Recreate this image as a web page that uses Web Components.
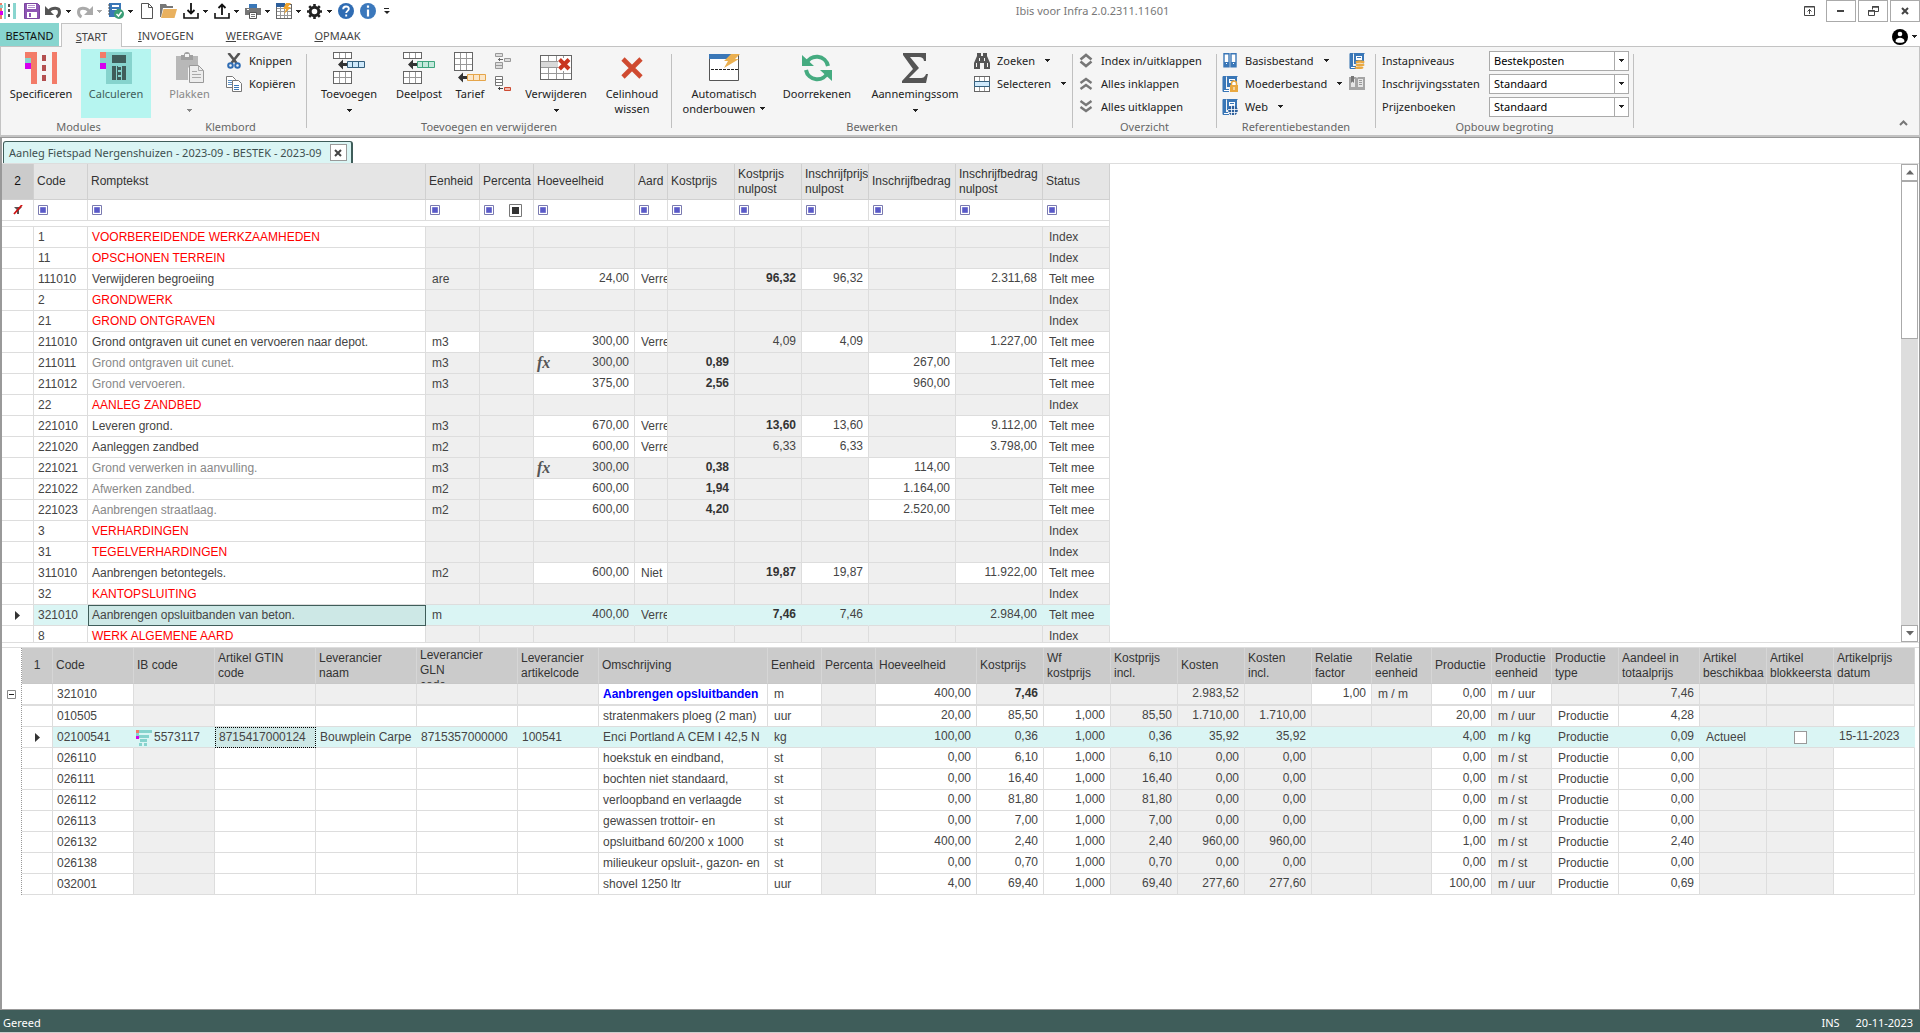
<!DOCTYPE html>
<html lang="nl">
<head>
<meta charset="utf-8">
<title>Ibis voor Infra</title>
<style>
html,body{margin:0;height:100%}
body{font:11px/15px "Noto Sans","Open Sans",sans-serif;color:#222;background:#fff;overflow:hidden}
ibis-app{height:100vh}
</style>
</head>
<body>
<ibis-app></ibis-app>
<script>
const grid9=(x,y,w,h,c,r,s='#666',f='#fff')=>{let o=`<rect x="${x+.5}" y="${y+.5}" width="${w-1}" height="${h-1}" fill="${f}"/>`;let p='';for(let i=1;i<c;i++)p+=`M${Math.round(x+i*(w-1)/c)+.5} ${y+1}v${h-2}`;for(let i=1;i<r;i++)p+=`M${x+1} ${Math.round(y+i*(h-1)/r)+.5}h${w-2}`;return `<g stroke="${s}" fill="none">${o}<path d="${p}" stroke="#999"/></g>`};
const book='<path d="M1 0h14v1M1 .5v15" stroke="#2d6cad" fill="none"/><path d="M1 0h3v13H1zM5 0h10v11H5z" fill="#3a77b7"/><path d="M1 13h6v3H1z" fill="#3a77b7"/><path d="M2 14h5v1H2z" fill="#fff"/><path d="M7 3h6v4H7z" fill="#fff"/><path d="M8 4.5h4" stroke="#3a77b7"/>';
const insertArrow=(f,s)=>grid9(0,0,19,7,3,1)+grid9(0,19,19,13,3,2)+`<path d="M5 12.500l5-5v3.500h4v3h-4v3.500z" fill="#333"/><path d="M14.500 9.500h17v6h-17zM19.500 9.500v6M25.500 9.500v6" fill="${f}" stroke="${s}"/>`;
const ICONS={
 app:[16,16,'<path d="M0 0h2v16H0z" fill="#ee7b66"/><path d="M0 2h3v3H0z" fill="#89d5cf"/><path d="M0 8h3v4H0z" fill="#d400ee"/><path d="M4 0h2v16H4zM13 0h3v16h-3z" fill="#89d5cf"/><path d="M8 1h2v3H8zM8 6h2v3H8zM8 11h2v3H8z" fill="#555"/>'],
 save:[16,16,'<path d="M.5.5h13l2 2v13H.5z" fill="#8e56b4" stroke="#7b449f"/><path d="M3 1h9v5H3z" fill="#fff"/><path d="M4 2.500h7M4 4.500h7" stroke="#b48fce"/><path d="M3 9h10v6H3z" fill="#fff"/><path d="M5 10h2v4H5z" fill="#8e56b4"/>'],
 undo:[17,16,'<path d="M4 8C7 4.500 14.500 4 14.500 9c0 2-1 4-3 5" fill="none" stroke="#555" stroke-width="3"/><path d="M0 3v9h9z" fill="#555"/>'],
 redo:[17,16,'<path d="M13 8C10 4.500 2.500 4 2.500 9c0 2 1 4 3 5" fill="none" stroke="#aaa" stroke-width="3"/><path d="M17 3v9H8z" fill="#aaa"/>'],
 doccheck:[16,16,'<path d="M1 0h12v8l-5 6H1z" fill="#3a77b7"/><path d="M4 2h7v2H4zM4 6h5v1H4z" fill="#fff"/><path d="M0 2h2M0 5h2M0 8h2M0 11h2" stroke="#555"/><circle cx="11" cy="11" r="5" fill="#3a9e76"/><path d="M8.500 11l2 2 3-4" stroke="#fff" stroke-width="1.500" fill="none"/>'],
 file:[16,16,'<path d="M2.500.5h7l4 4v11h-11z" fill="#fff" stroke="#555"/><path d="M9.500.5v4h4" fill="none" stroke="#555"/>'],
 folder:[17,16,'<path d="M0 1h6l1 2h6v2H3L1 14H0z" fill="#777"/><path d="M3.500 6H17l-2.500 9H1z" fill="#e9b15f"/>'],
 down:[16,16,'<path d="M1 10v5h14v-5" fill="none" stroke="#111" stroke-width="1.600"/><path d="M8 0v10M4.500 7L8 10.500 11.500 7" fill="none" stroke="#111" stroke-width="1.800"/>'],
 up:[16,16,'<path d="M1 10v5h14v-5" fill="none" stroke="#111" stroke-width="1.600"/><path d="M8 12V2M4.500 5L8 1.500 11.500 5" fill="none" stroke="#111" stroke-width="1.800"/>'],
 print:[16,16,'<path d="M4 1h8v4H4z" fill="#3a77b7"/><path d="M0 5h16v7H0z" fill="#777"/><path d="M2 6.500h2" stroke="#fff"/><path d="M4.500 9.500h7v6h-7z" fill="#fff" stroke="#555"/><path d="M6 11.500h4M6 13.500h4" stroke="#777"/>'],
 bolttable:[16,16,grid9(0,1,16,15,4,4)+'<path d="M0 0h9v4H0z" fill="#2d5f9b"/><path d="M10 0h5l-3 4h3l-7 7 2-5H7z" fill="#f0a52e"/>'],
 gear:[15,15,'<circle cx="7.500" cy="7.500" r="4.300" fill="none" stroke="#222" stroke-width="3"/><path d="M7.500 0v3M7.500 12v3M0 7.500h3M12 7.500h3M2.200 2.200l2 2M10.800 10.800l2 2M2.200 12.800l2-2M10.800 4.200l2-2" stroke="#222" stroke-width="2.600"/>'],
 help:[16,16,'<circle cx="8" cy="8" r="8" fill="#2f6cb3"/><path d="M5.200 6.200C5.200 2.500 11 2.600 10.800 6c-.1 1.800-2.600 2-2.600 4M8.200 11.500v2" fill="none" stroke="#fff" stroke-width="1.900"/>'],
 info:[16,16,'<circle cx="8" cy="8" r="8" fill="#3b78bc"/><path d="M8 2.500v2.200M8 6.500v7" stroke="#fff" stroke-width="2.200"/>'],
 more:[8,8,'<path d="M1 1.500h5" stroke="#222"/><path d="M1 4h6L4 7z" fill="#222"/>'],
 caret:[5,3,'<path d="M0 0h5v1H0zM1 1h3v1H1zM2 2h1v1H2z" fill="currentColor"/>'],
 spec:[32,32,'<path d="M0 0h12v32H6V15H0z" fill="#f37b68"/><path d="M0 6h6v6H0z" fill="#89d5cf"/><path d="M0 11h6v6H0z" fill="#d400ee"/><path d="M27 0h5v32h-5z" fill="#f37b68"/><path d="M17 3h4v6h-4zM17 13h4v6h-4zM17 23h4v6h-4z" fill="#b34f4f"/>'],
 calc:[32,32,'<path d="M6 0h26v32H6z" fill="#86d3cd"/><path d="M0 0h6v6H0z" fill="#f37b68"/><path d="M0 6h6v5H0z" fill="#86d3cd"/><path d="M0 11h6v6H0z" fill="#d400ee"/><path d="M12 3h14v8H12zM12 14h4v14h-4zM22 14h4v14h-4zM17 14h1v14h-1zM18 15h3v3h-3zM18 20h3v3h-3zM18 25h3v3h-3z" fill="#3f5d5a"/>'],
 paste:[30,32,'<path d="M1 4h22v10h-8l-2 2v12H1z" fill="#b8b8b8"/><path d="M6 3h3a3 3 0 016 0h3v5H6z" fill="#a0a0a0"/><path d="M10 2h4v3h-4z" fill="#f5f5f5"/><path d="M14.500 13.500h9l5 5v12h-14z" fill="#ededed" stroke="#999"/><path d="M23.500 13.500v5h5M17 19.500h5M17 22.500h9M17 25.500h9" stroke="#aaa" fill="none"/>'],
 cut:[16,16,'<path d="M2.500 0l8 10M13.500 0l-8 10" stroke="#555" stroke-width="2.600"/><circle cx="4.500" cy="12.500" r="2.300" fill="none" stroke="#2f6cb3" stroke-width="2"/><circle cx="11.500" cy="12.500" r="2.300" fill="none" stroke="#2f6cb3" stroke-width="2"/>'],
 copy:[16,16,'<path d="M.5.5h6l3 3v8h-9z" fill="#fff" stroke="#777"/><path d="M2 4.500h4M2 6.500h4M2 8.500h4" stroke="#5a8fc4"/><path d="M6.500 4.500h6l3 3v8h-9z" fill="#fff" stroke="#777"/><path d="M8 9.500h5M8 11.500h5M8 13.500h5" stroke="#3a77b7"/>'],
 add:[32,32,insertArrow('#cfe9fb','#35607e')],
 sub:[32,32,insertArrow('#c4e9dc','#3fa57e')],
 tarief:[32,32,grid9(0,0,19,19,3,3)+'<path d="M4 25.500l5-5V24h4v3H9v3.500z" fill="#333"/><path d="M13.500 22.500h18v6h-18zM19.500 22.500v6M25.500 22.500v6" fill="#fbe6c8" stroke="#e5a54a"/>'],
 inda:[16,16,'<path d="M.5.5h7v3h-7zM9.500 5.500h6v3h-6zM.5 9.500h7v6h-7zM.5 12.500h7" fill="#ddd" stroke="#999"/><path d="M3 6.500h5M4.500 5v3" stroke="#666"/>'],
 indb:[16,16,'<path d="M.5.5h7v9h-7zM.5 3.500h7M.5 6.500h7" fill="#fff" stroke="#777"/><path d="M9.500 11.500h6v3h-6z" fill="#f5b5ab" stroke="#cc4b32"/><path d="M3 12.500h5M4.500 11v3" stroke="#444"/>'],
 deltable:[32,25,grid9(0,0,32,25,4,4)+'<path d="M1 7h17v5H1z" fill="#d9d9d9"/><path d="M18 3h13v13H18z" fill="#fff"/><path d="M19.500 4.500l9.500 9.500M29 4.500L19.500 14" stroke="#c8351f" stroke-width="4"/>'],
 cross:[22,22,'<path d="M2 2l18 18M20 2L2 20" stroke="#cf4a30" stroke-width="4.600"/>'],
 auto:[31,27,'<path d="M.5.5h29v26H.5z" fill="#fff" stroke="#555"/><path d="M0 0h22l-3 5H0z" fill="#3a77b7"/><path d="M2 15.500h27" stroke="#222" stroke-dasharray="3 1"/><path d="M22 0h9l-5 5h4L15 14l4-7h-4z" fill="#ebb050"/>'],
 refresh:[30,28,'<path d="M4 10A11.500 11.500 0 0126 12M26 18A11.500 11.500 0 014 16" fill="none" stroke="#45ab80" stroke-width="4"/><path d="M0 1v11h12zM30 27V16H18z" fill="#45ab80"/>'],
 sigma:[26,30,'<path d="M1 0h23v8h-2c-.5-3-2-4-5-4H8l9 11L7 25h11c4 0 5-1.500 6-4h2l-2 9H0v-2l11-12L1 2z" fill="#555"/>'],
 find:[16,16,'<path d="M3 0h4v3h2V0h4v3l3 7v6h-6v-6H6v6H0v-6l3-7z" fill="#555"/><path d="M2.500 10v4M13.500 10v4M5.500 5v3M10.500 5v3" stroke="#f5f5f5"/>'],
 select:[16,16,grid9(0,0,16,16,3,3)+'<path d="M.5 5.500h15v5H.5z" fill="#cfe9fb" stroke="#35607e"/>'],
 inout:[14,15,'<path d="M1.500 6.500L7 2l5.500 4.500" fill="none" stroke="#777" stroke-width="2.600"/><path d="M1.500 8.500L7 13l5.500-4.500" fill="none" stroke="#777" stroke-width="2.600"/>'],
 collapse:[14,15,'<path d="M1.500 7L7 3l5.500 4M1.500 13L7 9l5.500 4" fill="none" stroke="#777" stroke-width="2.400"/>'],
 expand:[14,15,'<path d="M1.500 2L7 6l5.500-4M1.500 8L7 12l5.500-4" fill="none" stroke="#777" stroke-width="2.400"/>'],
 binders:[14,15,'<path d="M1 .7h5v13H1zM8 .7h5v13H8z" fill="#fff" stroke="#3a77b7" stroke-width="1.400"/><path d="M1 9h5v4H1zM8 9h5v4H8z" fill="#3a77b7"/><path d="M3 10.500h1M10 10.500h1" stroke="#fff"/>'],
 booklock:[16,16,book+'<path d="M8 9h8v7H8z" fill="#e9a840"/><path d="M9.500 9V7.500a2.500 2.500 0 015 0V9" fill="#fff" stroke="#e9a840" stroke-width="1.500"/><path d="M12 11v3" stroke="#fff"/>'],
 bookweb:[16,16,book+'<circle cx="11" cy="11.500" r="4.800" fill="#2d5f9b"/><path d="M6 10.500h10M6 13.500h10M9.500 7v9M12.500 7v9" stroke="#fff" stroke-width=".8"/>'],
 bookcoin:[16,16,book+'<ellipse cx="11" cy="9" rx="4.500" ry="1.800" fill="#e9a840"/><ellipse cx="11" cy="11.500" rx="4.500" ry="1.800" fill="#fbe6c8"/><ellipse cx="11" cy="12" rx="4.500" ry="1.300" fill="#e9a840"/><ellipse cx="10" cy="14.700" rx="4.500" ry="1.300" fill="#e9a840"/>'],
 openbook:[16,15,'<path d="M0 1h7l1 1 1-1h7v13H0z" fill="#a5a5a5"/><path d="M2 3h4v8H2zM9 3h5v8H9z" fill="#e6e6e6"/><path d="M10 4.500h3M10 6.500h3M10 8.500h3" stroke="#999"/><path d="M2 0h3v7L3.500 5.500 2 7z" fill="#777"/>'],
 ribbonopt:[11,10,'<path d="M.5.5h10v9H.5zM.5 1h10" fill="none" stroke="#444"/><path d="M5.500 3v5M3.500 5.500l2-2 2 2" stroke="#444" fill="none"/>'],
 min:[8,10,'<path d="M0 5h7" stroke="#444" stroke-width="2"/>'],
 restore:[11,10,'<path d="M4.500 3.500v-3h6v5h-4M.5 4.500h6v5h-6z" fill="none" stroke="#444"/><path d="M4 1h7M0 5h7" stroke="#444" stroke-width="1.500"/>'],
 close:[8,8,'<path d="M1 1l6 6M7 1L1 7" stroke="#444" stroke-width="2"/>'],
 user:[16,16,'<circle cx="8" cy="8" r="8" fill="#000"/><circle cx="8" cy="5" r="2.300" fill="#fff"/><path d="M3.500 12.500c0-5 9-5 9 0-1 1.800-8 1.800-9 0z" fill="#fff"/>'],
 chevup:[9,6,'<path d="M1 5l3.500-3.500L8 5" fill="none" stroke="#777" stroke-width="2"/>'],
 filteroff:[10,10,'<path d="M1 2h8L6 5v4H4V5z" fill="#555"/><path d="M1 9L9 0" stroke="#d01010" stroke-width="1.800"/>'],
 filter:[10,10,'<path d="M.5.5h9v9h-9z" fill="#fff" stroke="#7a7ab0"/><path d="M2.500 2.500h5v5h-5z" fill="#5a5ac8" stroke="#7878d2"/>'],
 filterdark:[13,13,'<path d="M.5.5h12v12H.5z" fill="#fff" stroke="#777"/><path d="M3 3h7v7H3z" fill="#333"/>'],
 rowmark:[5,9,'<path d="M0 0l5 4.500L0 9z" fill="#333"/>'],
 tri:[8,5,'<path d="M4 0l4 4.500H0z" fill="#666"/>'],
 tridown:[8,5,'<path d="M4 4.500L8 0H0z" fill="#666"/>'],
 ib:[16,16,'<path d="M3 0h13v3H3zM3 5h10v3H3zM4 9h7v3H4zM3 13h3v3H3zM8 13h3v3H8zM0 3h3v3H0z" fill="#86d3cd"/><path d="M0 0h3v3H0z" fill="#f37b68"/><path d="M0 6h3v3H0z" fill="#d400ee"/>'],
 minus:[9,9,'<path d="M.5.5h8v8h-8z" fill="#fff" stroke="#888"/><path d="M2 4.500h5" stroke="#222"/>']
};
class UiIcon extends HTMLElement{
 connectedCallback(){
  const [w,h,s]=ICONS[this.getAttribute('name')];
  this.attachShadow({mode:'open'}).innerHTML=`<style>:host{display:inline-flex;flex:none}svg{display:block}</style><svg width="${w}" height="${h}" viewBox="0 0 ${w} ${h}" aria-hidden="true">${s}</svg>`;
 }
}
class QuickItem extends HTMLElement{
 connectedCallback(){
  const m=this.hasAttribute('menu');
  this.attachShadow({mode:'open'}).innerHTML=`<style>:host{display:flex;width:${m?31:22}px;height:22px}
  button{all:unset;display:flex;align-items:center;gap:4px;color:${this.hasAttribute('off')?'#aaa':'#222'}}
  span{display:flex;justify-content:center;width:17px}</style>
  <button aria-label="${this.getAttribute('label')}"><span><ui-icon name="${this.getAttribute('icon')}"></ui-icon></span>${m?'<ui-icon name="caret"></ui-icon>':''}</button>`;
 }
}
class TitleBar extends HTMLElement{
 connectedCallback(){
  const items=[['save','Opslaan'],['undo','Ongedaan maken',1],['redo','Opnieuw',1,1],['doccheck','Controleren',1],['file','Nieuw'],['folder','Openen'],['down','Importeren',1],['up','Exporteren',1],['print','Afdrukken',1],['bolttable','Onderbouwen',1],['gear','Instellingen',1],['help','Help'],['info','Info']];
  this.attachShadow({mode:'open'}).innerHTML=`<style>
  :host{display:flex;height:23px;align-items:flex-start}
  .q{display:flex;align-items:center;height:22px}
  .q>ui-icon{margin-right:7px}
  .q>ui-icon:last-child{margin:0 0 0 2px}
  h1{margin:0;flex:1;text-align:center;font:inherit;line-height:22px;color:#777}
  .w{display:flex;justify-content:flex-end;gap:2px}
  button{all:unset;box-sizing:border-box;width:30px;height:22px;border:1px solid #aaa;display:flex;align-items:center;justify-content:center}
  .n{border:0}
  </style>
  <div class="q"><ui-icon name="app"></ui-icon>${items.map(([i,l,m,o])=>`<quick-item icon="${i}" label="${l}" ${m?'menu':''} ${o?'off':''}></quick-item>`).join('')}<ui-icon name="more"></ui-icon></div>
  <h1>Ibis voor Infra 2.0.2311.11601</h1>
  <div class="w"><button class="n" aria-label="Lint"><ui-icon name="ribbonopt"></ui-icon></button><button aria-label="Minimaliseren"><ui-icon name="min"></ui-icon></button><button aria-label="Herstellen"><ui-icon name="restore"></ui-icon></button><button aria-label="Sluiten"><ui-icon name="close"></ui-icon></button></div>`;
 }
}
class RibbonTabs extends HTMLElement{
 connectedCallback(){
  this.attachShadow({mode:'open'}).innerHTML=`<style>
  :host{display:flex;height:23px;border-bottom:1px solid #c3c3c3}
  button{all:unset;box-sizing:border-box;height:24px;line-height:26px;text-align:center;padding:0 16px;color:#444}
  button::first-letter{text-decoration:underline}
  .file{width:59px;padding:0;background:#87d5cf;color:#111;margin-right:2px;height:23px}
  .file::first-letter{text-decoration:none}
  .on{width:61px;padding:0;background:#f5f5f5;border:1px solid #c3c3c3;border-bottom:0;line-height:25px}
  nav{display:flex;flex:1}
  .u{display:flex;align-items:center;gap:4px;padding:3px 3px 0 0;color:#222}
  </style><nav><button class="file">BESTAND</button><button class="on">START</button><button>INVOEGEN</button><button>WEERGAVE</button><button>OPMAAK</button></nav>
  <button class="u" aria-label="Gebruiker"><ui-icon name="user"></ui-icon><ui-icon name="caret"></ui-icon></button>`;
 }
}
class RibbonGroup extends HTMLElement{
 connectedCallback(){
  this.attachShadow({mode:'open'}).innerHTML=`<style>
  :host{display:flex;align-items:center;height:88px;width:${this.getAttribute('w')}px}
  section{display:flex;flex-direction:column;height:88px;flex:1}
  .c{display:flex;gap:5px;padding:2px 4px 0;height:70px}
  h2{margin:0;font:inherit;text-align:center;line-height:18px;color:#666}
  i{width:1px;height:74px;background:#c0c0c0}
  ::slotted(.col){display:flex;flex-direction:column;align-items:flex-start}
  </style><section><div class="c"><slot></slot></div><h2>${this.getAttribute('label')}</h2></section><i></i>`;
 }
}
class BigButton extends HTMLElement{
 connectedCallback(){
  const m=this.getAttribute('menu');
  this.attachShadow({mode:'open'}).innerHTML=`<style>
  :host{display:flex;width:${this.getAttribute('w')}px;height:69px}
  button{all:unset;box-sizing:border-box;width:100%;display:flex;flex-direction:column;align-items:center;padding-top:2px}
  :host([active]) button{background:#b6f5f0;color:#3f5d5a}
  :host([off]) button{color:#888}
  .i{display:flex;align-items:center;justify-content:center;height:33px}
  .t{text-align:center;white-space:nowrap;padding-top:2px}
  .t>ui-icon{vertical-align:3px;margin-left:5px}
  button>ui-icon{margin-top:8px}
  </style><button><span class="i"><ui-icon name="${this.getAttribute('icon')}"></ui-icon></span><span class="t"><slot></slot>${m=='inline'?'<ui-icon name="caret"></ui-icon>':''}</span>${m=='below'?'<ui-icon name="caret"></ui-icon>':''}</button>`;
 }
}
class SmallButton extends HTMLElement{
 connectedCallback(){
  this.attachShadow({mode:'open'}).innerHTML=`<style>
  :host{display:flex;height:23px}
  button{all:unset;display:flex;align-items:center;white-space:nowrap;padding:0 1px}
  .i{display:flex;justify-content:center;width:16px}
  .t{padding-left:7px}
  button>ui-icon{margin-left:10px}
  :host([bare]) .t{display:none}
  </style><button aria-label="${this.getAttribute('label')||this.textContent}"><span class="i"><ui-icon name="${this.getAttribute('icon')}"></ui-icon></span><span class="t"><slot></slot></span>${this.hasAttribute('menu')?'<ui-icon name="caret"></ui-icon>':''}</button>`;
 }
}
class RibbonSelect extends HTMLElement{
 connectedCallback(){
  this.attachShadow({mode:'open'}).innerHTML=`<style>
  :host{display:flex;width:249px;height:23px;align-items:center;justify-content:space-between}
  label{padding-left:2px}
  .b{display:grid;width:140px;height:20px;box-sizing:border-box;border:1px solid #aaa;background:#fff}
  select,.a{grid-area:1/1}
  select{appearance:none;border:0;outline:0;background:none;font:inherit;color:#000;padding:0 16px 0 4px;margin:0}
  .a{justify-self:end;width:13px;border-left:1px solid #aaa;display:flex;align-items:center;justify-content:center;pointer-events:none}
  </style><label for="s">${this.getAttribute('label')}</label><span class="b"><select id="s"><option>${this.getAttribute('value')}</option></select><span class="a"><ui-icon name="caret"></ui-icon></span></span>`;
 }
}
class RibbonBar extends HTMLElement{
 connectedCallback(){
  this.attachShadow({mode:'open'}).innerHTML=`<style>
  :host{display:flex;height:88px;background:#f5f5f5;border:solid #c3c3c3;border-width:0 1px 2px 1px;align-items:flex-start;padding-left:1px}
  .x{all:unset;margin:0 11px 6px auto;align-self:flex-end}
  .k{width:122px}
  </style>
  <ribbon-group label="Modules" w="153"><big-button icon="spec" w="70">Specificeren</big-button><big-button icon="calc" w="70" active>Calculeren</big-button></ribbon-group>
  <ribbon-group label="Klembord" w="152"><big-button icon="paste" w="61" menu="below" off>Plakken</big-button><div class="col"><small-button icon="cut">Knippen</small-button><small-button icon="copy">Kopiëren</small-button></div></ribbon-group>
  <ribbon-group label="Toevoegen en verwijderen" w="365"><big-button icon="add" w="76" menu="below">Toevoegen</big-button><big-button icon="sub" w="54">Deelpost</big-button><big-button icon="tarief" w="38">Tarief</big-button><div class="col"><small-button bare icon="inda" label="Inspringen"></small-button><small-button bare icon="indb" label="Uitspringen"></small-button></div><big-button icon="deltable" w="78" menu="below">Verwijderen</big-button><big-button icon="cross" w="64">Celinhoud<br>wissen</big-button></ribbon-group>
  <ribbon-group label="Bewerken" w="401"><big-button icon="auto" w="96" menu="inline">Automatisch<br>onderbouwen</big-button><big-button icon="refresh" w="80">Doorrekenen</big-button><big-button icon="sigma" w="106" menu="below">Aannemingssom</big-button><div class="col"><small-button icon="find" menu>Zoeken</small-button><small-button icon="select" menu>Selecteren</small-button></div></ribbon-group>
  <ribbon-group label="Overzicht" w="144"><div class="col"><small-button icon="inout">Index in/uitklappen</small-button><small-button icon="collapse">Alles inklappen</small-button><small-button icon="expand">Alles uitklappen</small-button></div></ribbon-group>
  <ribbon-group label="Referentiebestanden" w="159"><div class="col k"><small-button icon="binders" menu>Basisbestand</small-button><small-button icon="booklock" menu>Moederbestand</small-button><small-button icon="bookweb" menu>Web</small-button></div><div class="col"><small-button bare icon="bookcoin" label="Prijzen"></small-button><small-button bare icon="openbook" label="Catalogus"></small-button></div></ribbon-group>
  <ribbon-group label="Opbouw begroting" w="258"><div class="col"><ribbon-select label="Instapniveaus" value="Bestekposten"></ribbon-select><ribbon-select label="Inschrijvingsstaten" value="Standaard"></ribbon-select><ribbon-select label="Prijzenboeken" value="Standaard"></ribbon-select></div></ribbon-group>
  <button class="x" aria-label="Lint inklappen"><ui-icon name="chevup"></ui-icon></button>`;
 }
}
class DocTab extends HTMLElement{
 connectedCallback(){
  this.attachShadow({mode:'open'}).innerHTML=`<style>
  :host{display:flex;padding:3px 0 0 1px;border-bottom:1px solid #ddd;height:22px}
  div{display:flex;align-items:center;gap:8px;background:#daf5f4;border:1px solid #3f5d5a;border-width:1px 2px 0 1px;border-radius:3px 3px 0 0;padding:0 4px 0 5px;color:#3f5050}
  button{all:unset;box-sizing:border-box;width:17px;height:17px;border:1px solid #999;background:#fff;display:flex;align-items:center;justify-content:center}
  </style><div><span><slot></slot></span><button aria-label="Tabblad sluiten"><ui-icon name="close"></ui-icon></button></div>`;
 }
}
const GRIDCSS=`
 :host{display:block;font:12px/15px "Liberation Sans",Arial,sans-serif;color:#444}
 table{border-collapse:separate;border-spacing:0;table-layout:fixed;width:0}
 th,td{padding:0;box-sizing:border-box;border:solid #ddd;border-width:0 1px 1px 0;font-weight:400;text-align:left;white-space:nowrap;overflow:hidden;vertical-align:middle}
 th{height:36px;color:#333;padding-left:3px;border-color:#d0d0d0}
 th div{max-height:35px;overflow:hidden;white-space:pre}
 td{height:21px;padding:1px 0 0 6px}
 td.n{text-align:right;padding:0 5px 1px 0}
 td.g{background:#efefef}
 td:first-child,th:first-child{text-align:center;padding:0}
 td b{color:#333}
 .red{color:#f00}.sub{color:#888}
 tr.hi td:not(:first-child){background:#daf5f4;border-right-color:#daf5f4}
 td>ui-icon{vertical-align:middle}`;
const td=(v,c='')=>`<td class="${c}">${v}</td>`;
class BudgetGrid extends HTMLElement{
 connectedCallback(){
  const W=[32,54,338,54,54,101,33,67,67,67,87,87,67];
  const H=['2','Code','Romptekst','Eenheid','Percenta','Hoeveelheid','Aard','Kostprijs','Kostprijs\nnulpost','Inschrijfprijs\nnulpost','Inschrijfbedrag','Inschrijfbedrag\nnulpost','Status'];
  const R=[['1','VOORBEREIDENDE WERKZAAMHEDEN'],['11','OPSCHONEN TERREIN'],
  ['111010','Verwijderen begroeiing','are','24,00','Verre','<b>96,32</b>','96,32','2.311,68'],
  ['2','GRONDWERK'],['21','GROND ONTGRAVEN'],
  ['211010','Grond ontgraven uit cunet en vervoeren naar depot.','m3','300,00','Verre','4,09','4,09','1.227,00'],
  ['211011','Grond ontgraven uit cunet.','m3','300,00','fx','0,89','267,00'],
  ['211012','Grond vervoeren.','m3','375,00','','2,56','960,00'],
  ['22','AANLEG ZANDBED'],
  ['221010','Leveren grond.','m3','670,00','Verre','<b>13,60</b>','13,60','9.112,00'],
  ['221020','Aanleggen zandbed','m2','600,00','Verre','6,33','6,33','3.798,00'],
  ['221021','Grond verwerken in aanvulling.','m3','300,00','fx','0,38','114,00'],
  ['221022','Afwerken zandbed.','m2','600,00','','1,94','1.164,00'],
  ['221023','Aanbrengen straatlaag.','m2','600,00','','4,20','2.520,00'],
  ['3','VERHARDINGEN'],['31','TEGELVERHARDINGEN'],
  ['311010','Aanbrengen betontegels.','m2','600,00','Niet','<b>19,87</b>','19,87','11.922,00'],
  ['32','KANTOPSLUITING'],
  ['321010','Aanbrengen opsluitbanden van beton.','m','400,00','Verre','<b>7,46</b>','7,46','2.984,00'],
  ['8','WERK ALGEMENE AARD']];
  const g=td('','g');
  const rows=R.map(r=>{
   const hi=r[0]=='321010';
   let h=td(hi?'<ui-icon name="rowmark"></ui-icon>':'')+td(r[0]);
   if(r.length==2)h+=td(r[1],'red')+g.repeat(9)+td('Index','g');
   else if(r.length==8)h+=td(r[1],hi?'sel':'')+td(r[2],r[0]=='211010'?'':'g')+g+td(r[3],'n')+td(`<div>${r[4]}</div>`)+g+td(r[5],'n g')+td(r[6],'n')+g+td(r[7],'n')+td('Telt mee');
   else{const fx=r[4]=='fx';h+=td(r[1],'sub')+td(r[2],'g')+g+td(fx?`<span class="f"><em>fx</em>${r[3]}</span>`:r[3],fx?'n g':'n')+g+td(`<b>${r[5]}</b>`,'n g')+g+g+td(r[6],'n')+g+td('Telt mee');}
   return `<tr class="${hi?'hi':''}">${h}</tr>`;}).join('');
  this.attachShadow({mode:'open'}).innerHTML=`<style>${GRIDCSS}
  th{background:#e5e5e5}th:first-child{background:#cbcbcb;color:#111}
  td:nth-child(2),td:nth-child(3){padding-left:4px}
  .fl td{padding:0 0 0 4px}.fl td:first-child{padding:0}
  .fl div{display:flex;align-items:center;justify-content:space-between;padding-right:11px}
  .sp td{height:6px;padding:0}
  td div{overflow:hidden;padding-right:1px}
  .f{display:flex;justify-content:space-between;align-items:center;padding-left:3px}
  em{font:italic 700 16px/16px "Liberation Serif",serif;color:#555}
  tr.hi td.sel{background:#cde8e6;outline:1px solid #3f5d5a;outline-offset:-1px}
  </style><table><colgroup>${W.map(w=>`<col style="width:${w}px">`).join('')}</colgroup>
  <thead><tr>${H.map(h=>`<th><div>${h}</div></th>`).join('')}</tr></thead>
  <tbody><tr class="fl"><td><ui-icon name="filteroff"></ui-icon></td>${W.slice(1).map((w,i)=>i==3?'<td><div><ui-icon name="filter"></ui-icon><ui-icon name="filterdark"></ui-icon></div></td>':'<td><ui-icon name="filter"></ui-icon></td>').join('')}</tr>
  <tr class="sp"><td colspan="13"></td></tr>${rows}</tbody></table>`;
 }
}
class DetailGrid extends HTMLElement{
 connectedCallback(){
  const W=[31,81,81,101,101,101,81,169,54,54,101,67,67,67,67,67,60,60,60,60,67,81,67,67,81];
  const H=['1','Code','IB code','Artikel GTIN\ncode','Leverancier\nnaam','Leverancier\nGLN\ncode','Leverancier\nartikelcode','Omschrijving','Eenheid','Percenta','Hoeveelheid','Kostprijs','Wf\nkostprijs','Kostprijs\nincl.','Kosten','Kosten\nincl.','Relatie\nfactor','Relatie\neenheid','Productie','Productie\neenheid','Productie\ntype','Aandeel in\ntotaalprijs','Artikel\nbeschikbaa','Artikel\nblokkeersta','Artikelprijs\ndatum'];
  const R=[['010505','stratenmakers ploeg (2 man)','uur','20,00','85,50','1.710,00','20,00','4,28'],
  ['02100541','Enci Portland A CEM I 42,5 N','kg','100,00','0,36','35,92','4,00','0,09'],
  ['026110','hoekstuk en eindband,','st','0,00','6,10','0,00','0,00','0,00'],
  ['026111','bochten niet standaard,','st','0,00','16,40','0,00','0,00','0,00'],
  ['026112','verloopband en verlaagde','st','0,00','81,80','0,00','0,00','0,00'],
  ['026113','gewassen trottoir- en','st','0,00','7,00','0,00','0,00','0,00'],
  ['026132','opsluitband 60/200 x 1000','st','400,00','2,40','960,00','1,00','2,40'],
  ['026138','milieukeur opsluit-, gazon- en','st','0,00','0,70','0,00','0,00','0,00'],
  ['032001','shovel 1250 ltr','uur','4,00','69,40','277,60','100,00','0,69']];
  const g=td('','g'),e=td('');
  const first=`<tr class="p">${td('')+td('321010')+g.repeat(5)+td('<b class="bl">Aanbrengen opsluitbanden</b>')+td('m')+g+td('400,00','n')+td('<b>7,46</b>','n g')+g+g+td('2.983,52','n g')+g+td('1,00','n')+td('m / m','g')+td('0,00','n')+td('m / uur')+g+td('7,46','n g')+g.repeat(3)}</tr>`;
  const rows=R.map((r,i)=>{const hi=i==1;return `<tr class="${hi?'hi':''}">${td(hi?'<ui-icon name="rowmark"></ui-icon>':'')+td(r[0])
   +(hi?td('<span class="ib"><ui-icon name="ib"></ui-icon>5573117</span>','t')+td('8715417000124','sel')+td('Bouwplein Carpe')+td('8715357000000')+td('100541'):g+e.repeat(4))
   +td(r[1])+td(r[2])+g+td(r[3],'n')+td(r[4],'n')+td('1,000','n')+td(r[4],'n g')+td(r[5],'n g')+td(r[5],'n g')+g+g+td(r[6],'n')+td('m / '+r[2],'g')+td('Productie')+td(r[7],'n')
   +(hi?td('Actueel')+td('<input type="checkbox" aria-label="Artikel blokkeerstatus">','c')+td('15-11-2023','d'):g+g+e)}</tr>`}).join('');
  this.attachShadow({mode:'open'}).innerHTML=`<style>${GRIDCSS}
  :host{display:flex;align-items:flex-start;border-top:1px solid #ddd}
  .gut{width:19px;display:flex;justify-content:flex-end;padding-top:42px}
  .gut button{all:unset;display:flex;margin-right:5px}
  table{border-left:1px dotted #999}
  td:nth-child(-n+8):not(.t){padding-left:4px}
  tbody td:first-child:not(.t){padding:0}
  th{background:#cbcbcb;border-color:#d6d6d6 #d6d6d6 #c8c8c8}
  .p td{height:22px;border-bottom-width:2px}
  td.t{padding-left:2px}.ib{display:flex;align-items:center;gap:2px}
  .bl{color:#00f}
  tr.hi td.sel{background:#cde8e6;outline:1px dotted #000;outline-offset:-1px}
  td.c{text-align:center;padding:0}td.d{padding:0 0 1px 5px}
  input{display:block;appearance:none;box-sizing:border-box;width:13px;height:13px;border:1px solid #999;background:#fff;margin:0 auto}
  </style><div class="gut"><button aria-label="Inklappen"><ui-icon name="minus"></ui-icon></button></div>
  <table><colgroup>${W.map(w=>`<col style="width:${w}px">`).join('')}</colgroup><thead><tr>${H.map(h=>`<th><div>${h}</div></th>`).join('')}</tr></thead><tbody>${first+rows}</tbody></table>`;
 }
}
class ScrollRail extends HTMLElement{
 connectedCallback(){
  this.attachShadow({mode:'open'}).innerHTML=`<style>
  :host{display:flex;flex-direction:column;width:17px;background:#ddd}
  button,.th{all:unset;box-sizing:border-box;height:17px;border:1px solid #aaa;background:#fff;display:flex;align-items:center;justify-content:center}
  .th{height:33%}
  button:last-child{margin-top:auto}
  </style><button aria-label="Omhoog"><ui-icon name="tri"></ui-icon></button><div class="th"></div><button aria-label="Omlaag"><ui-icon name="tridown"></ui-icon></button>`;
 }
}
class StatusBar extends HTMLElement{
 connectedCallback(){
  this.attachShadow({mode:'open'}).innerHTML=`<style>
  :host{display:flex;gap:16px;height:22px;line-height:25px;background:#3f5d5a;color:#fff;padding:0 7px 0 3px;border-bottom:1px solid #ccc}
  .s{margin-right:auto}
  </style><span class="s">Gereed</span><span>INS</span><span>20-11-2023</span>`;
 }
}
class IbisApp extends HTMLElement{
 connectedCallback(){
  this.attachShadow({mode:'open'}).innerHTML=`<style>
  :host{display:flex;flex-direction:column}
  main{flex:1;min-height:0;display:flex;flex-direction:column;border:solid #999;border-width:1px 1px 1px 2px}
  .top{display:flex;flex:0 0 478px;justify-content:space-between;overflow:hidden;border-bottom:1px solid #ddd;margin-bottom:4px;padding-right:1px}
  .top budget-grid{height:478px;overflow:hidden}
  detail-grid{flex:1;min-height:0;overflow:hidden}
  </style>
  <title-bar></title-bar><ribbon-tabs></ribbon-tabs><ribbon-bar></ribbon-bar>
  <main><doc-tab>Aanleg Fietspad Nergenshuizen - 2023-09 - BESTEK - 2023-09</doc-tab>
  <div class="top"><budget-grid></budget-grid><scroll-rail></scroll-rail></div>
  <detail-grid></detail-grid></main><status-bar></status-bar>`;
 }
}
for(const [n,c] of [['ui-icon',UiIcon],['quick-item',QuickItem],['title-bar',TitleBar],['ribbon-tabs',RibbonTabs],['ribbon-group',RibbonGroup],['big-button',BigButton],['small-button',SmallButton],['ribbon-select',RibbonSelect],['ribbon-bar',RibbonBar],['doc-tab',DocTab],['budget-grid',BudgetGrid],['detail-grid',DetailGrid],['scroll-rail',ScrollRail],['status-bar',StatusBar],['ibis-app',IbisApp]])customElements.define(n,c);
</script>
</body>
</html>
